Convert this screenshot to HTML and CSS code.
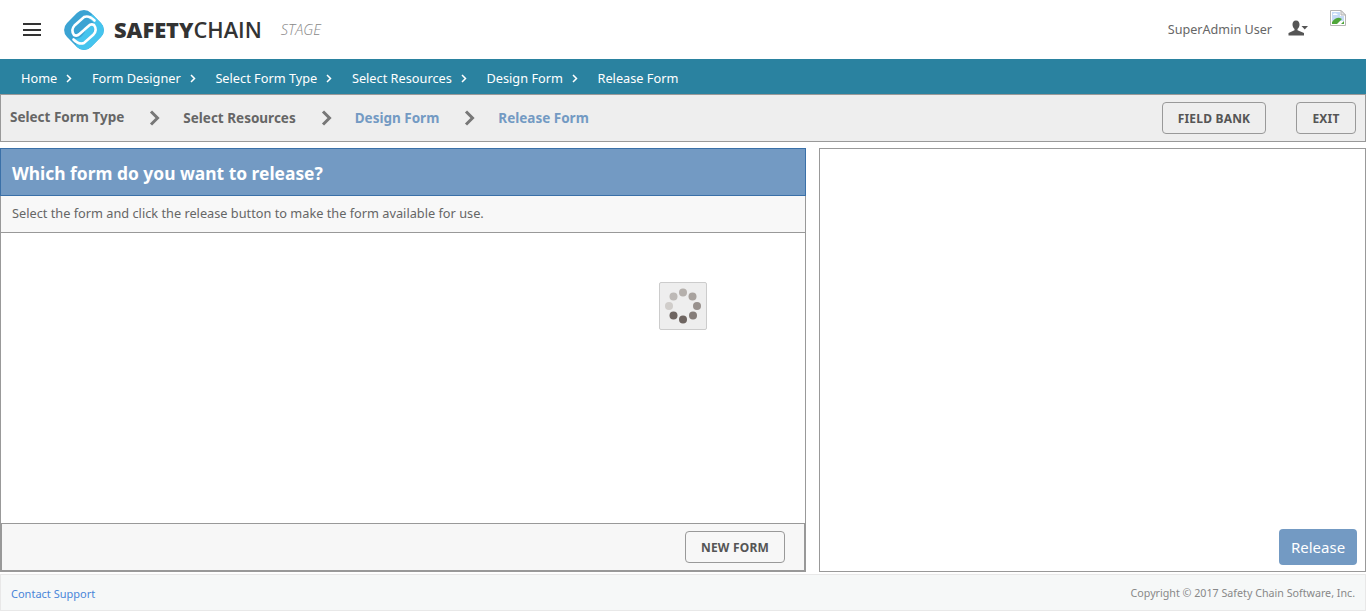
FILE: index.html
```html
<!DOCTYPE html>
<html lang="en">
<head>
<meta charset="utf-8">
<title>Release Form</title>
<link rel="stylesheet" href="styles.css">
</head>
<body>
<header class="topbar">
  <button class="menu" aria-label="Menu"><span></span><span></span><span></span></button>
  <svg class="logo" width="40" height="40" viewBox="0 0 40 40" aria-hidden="true">
    <defs><clipPath id="mark"><rect x="3" y="3" width="34" height="34" rx="10" transform="rotate(45 20 20)"/></clipPath></defs>
    <g clip-path="url(#mark)">
      <rect width="40" height="40" fill="#3ba3d3"/>
      <path d="M29 12 Q33 17 30 22 L20 32 Q16 35 12 33 L13 42 L42 42 L42 6 L31 4 Q27 5 23 7 Z" fill="#45c4ee"/>
      <path d="M21 19.500 L27 14 Q30 15 30 19 Q30 22 28 24 L20 32 Q16 35 10 29 Q15 29 18 26 L21 22 Z" fill="#45c4ee"/>
    </g>
    <path d="M30.500 10.500 Q25 5 20 7 L10.500 15.500 Q6.500 20 10 25 Q13 26.500 15.500 24 L19.500 20.500" fill="none" stroke="#fff" stroke-width="2.600" stroke-linecap="round"/>
    <path d="M9.500 29.500 Q15 35 20 33 L29.500 24.500 Q33.500 20 30 15 Q27 13.500 24.500 16 L20.500 19.500" fill="none" stroke="#fff" stroke-width="2.600" stroke-linecap="round"/>
  </svg>
  <div class="brand"><b>SAFETY</b><span>CHAIN</span></div>
  <div class="stage">STAGE</div>
  <div class="user">SuperAdmin User</div>
  <svg class="usericon" width="20" height="16" viewBox="0 0 20 16" aria-hidden="true">
    <path d="M8 0.500 C5.500 0.500 4.500 2.500 4.500 4.500 C4.500 6.800 5.500 8.300 6.500 9 L6.500 10.300 L0.500 13 L0.500 15.500 L16 15.500 L16 13 L9.500 10.300 L9.500 9 C10.500 8.300 11.500 6.800 11.500 4.500 C11.500 2.500 10.500 0.500 8 0.500 Z" fill="#555"/>
    <path d="M13.500 6 L20 6 L16.750 9.500 Z" fill="#555"/>
  </svg>
  <svg class="broken" width="16" height="16" viewBox="0 0 16 16" aria-hidden="true">
    <path d="M0.500 0.500 H11 L15.500 5 V15.500 H0.500 Z" fill="#fff" stroke="#b5b5b5"/>
    <path d="M2 2 H10 V6 H14 V11 H2 Z" fill="#c5daf6"/>
    <path d="M3 4 Q5 2.500 7 4 L8 5 H3 Z" fill="#fff"/>
    <path d="M2 14 V12 Q6 7 10 8 L12 9 L7 14 Z" fill="#4fa63a"/>
    <path d="M11 14 L14 11 V14 Z" fill="#4fa63a"/>
    <path d="M11 0.500 V5 H15.500 Z" fill="#e4e4e4" stroke="#b5b5b5"/>
  </svg>
</header>
<nav class="crumbs">
  <a>Home</a><svg class="sep" width="6" height="9" viewBox="0 0 6 9" aria-hidden="true"><path d="M1 1 L4.500 4.500 L1 8" fill="none" stroke="#fff" stroke-width="1.500"/></svg>
  <a>Form Designer</a><svg class="sep" width="6" height="9" viewBox="0 0 6 9" aria-hidden="true"><path d="M1 1 L4.500 4.500 L1 8" fill="none" stroke="#fff" stroke-width="1.500"/></svg>
  <a>Select Form Type</a><svg class="sep" width="6" height="9" viewBox="0 0 6 9" aria-hidden="true"><path d="M1 1 L4.500 4.500 L1 8" fill="none" stroke="#fff" stroke-width="1.500"/></svg>
  <a>Select Resources</a><svg class="sep" width="6" height="9" viewBox="0 0 6 9" aria-hidden="true"><path d="M1 1 L4.500 4.500 L1 8" fill="none" stroke="#fff" stroke-width="1.500"/></svg>
  <a>Design Form</a><svg class="sep" width="6" height="9" viewBox="0 0 6 9" aria-hidden="true"><path d="M1 1 L4.500 4.500 L1 8" fill="none" stroke="#fff" stroke-width="1.500"/></svg>
  <a>Release Form</a>
</nav>
<section class="steps">
  <span class="step first">Select Form Type</span>
  <svg class="chev" width="12" height="16" viewBox="0 0 12 16" aria-hidden="true"><path d="M2 1.500 L8.500 8 L2 14.500" fill="none" stroke="#777" stroke-width="3"/></svg>
  <span class="step">Select Resources</span>
  <svg class="chev" width="12" height="16" viewBox="0 0 12 16" aria-hidden="true"><path d="M2 1.500 L8.500 8 L2 14.500" fill="none" stroke="#777" stroke-width="3"/></svg>
  <span class="step todo">Design Form</span>
  <svg class="chev" width="12" height="16" viewBox="0 0 12 16" aria-hidden="true"><path d="M2 1.500 L8.500 8 L2 14.500" fill="none" stroke="#777" stroke-width="3"/></svg>
  <span class="step todo">Release Form</span>
  <button class="btn bank">FIELD BANK</button>
  <button class="btn exit">EXIT</button>
</section>
<main class="work">
  <section class="left">
    <h1 class="title">Which form do you want to release?</h1>
    <p class="hint">Select the form and click the release button to make the form available for use.</p>
    <div class="list">
      <div class="spinner" aria-hidden="true">
        <svg width="36" height="36" viewBox="0 0 36 36">
          <circle cx="18" cy="4.500" r="4" fill="#b5b0ac"/>
          <circle cx="27.500" cy="8.500" r="4" fill="#a8a29e"/>
          <circle cx="32" cy="18" r="4" fill="#98918d"/>
          <circle cx="28" cy="27.500" r="4" fill="#857d79"/>
          <circle cx="18" cy="31.500" r="4" fill="#6e6561"/>
          <circle cx="8.500" cy="27.500" r="4" fill="#6e6561"/>
          <circle cx="4" cy="18" r="4" fill="#d0cdca"/>
          <circle cx="8.500" cy="8.500" r="4" fill="#bdb9b6"/>
        </svg>
      </div>
    </div>
    <div class="leftfoot"><button class="btn newform">NEW FORM</button></div>
  </section>
  <section class="right">
    <button class="release">Release</button>
  </section>
</main>
<footer class="foot">
  <a class="support">Contact Support</a>
  <span class="copy">Copyright © 2017 Safety Chain Software, Inc.</span>
</footer>
</body>
</html>
```
FILE: styles.css
```css
* { box-sizing: border-box; }
html, body { margin: 0; padding: 0; }
body {
  width: 1366px;
  height: 612px;
  overflow: hidden;
  background: #fff;
  font-family: "Noto Sans", "Open Sans", sans-serif;
  font-size: 13px;
  color: #666;
}
button { font-family: inherit; cursor: pointer; }

.topbar { height: 59px; display: flex; align-items: center; position: relative; }
.menu { width: 18px; height: 13px; margin-left: 23px; padding: 0; border: 0; background: none; display: flex; flex-direction: column; justify-content: space-between; }
.menu span { display: block; height: 2px; background: #333; }
.logo { margin-left: 23px; }
.brand { margin-left: 10px; font-size: 21.800px; color: #333; font-family: "Open Sans", sans-serif; margin-top: -1px; }
.brand b { font-weight: 800; }
.brand span { font-weight: 600; }
.stage { margin-left: 19px; font-size: 14.600px; font-weight: 300; font-style: italic; color: #888; font-family: "Open Sans", sans-serif; margin-top: -1px; }
.user { margin-left: auto; font-size: 12.600px; color: #666; }
.usericon { margin-left: 16px; margin-top: -3px; }
.broken { margin-left: 22px; margin-right: 20px; margin-top: -23px; }

.crumbs { height: 35px; background: #2a82a0; display: flex; align-items: center; padding: 3px 0 0 21px; color: #fff; }
.crumbs a { font-size: 12.750px; color: #fff; }
.sep { margin: 0 19.600px 0 9px; }

.steps { height: 48px; background: #eee; border: 1px solid #999; display: flex; align-items: center; padding: 0 0 0 9px; }
.step { font-size: 13.500px; font-weight: 700; color: #666; }
.step.first { margin-top: -3px; }
.step.todo { color: #739ac3; }
.chev { margin: 0 22px 0 25px; }
.btn { height: 32px; background: transparent; border: 1px solid #999; border-radius: 4px; font-size: 12px; font-weight: 700; color: #555; letter-spacing: .2px; padding: 0; }
.bank { width: 104px; margin-left: auto; }
.exit { width: 60px; margin: 0 9px 0 30px; }

.work { display: flex; gap: 13px; margin-top: 6px; height: 424px; }
.left { width: 806px; display: flex; flex-direction: column; border: 1px solid #999; border-top: 0; border-bottom: 0; }
.title { margin: 0 0 0 -1px; width: 806px; height: 48px; background: #739ac3; border: 1px solid #3a70a8; color: #fff; font-size: 17.400px; font-weight: 700; line-height: 48px; padding-left: 11px; }
.hint { margin: 0 0 0 -1px; width: 806px; height: 37px; background: #f8f8f8; border: 1px solid #999; border-top: 0; font-size: 12.750px; line-height: 35px; padding-left: 11px; }
.list { flex: 1; position: relative; }
.spinner { position: absolute; left: 658px; top: 49px; width: 48px; height: 48px; background: #eee; border: 1px solid #ccc; border-radius: 2px; display: flex; align-items: center; justify-content: center; }
.leftfoot { height: 49px; margin-left: -1px; width: 806px; background: #f7f7f7; border: 2px solid #999; border-top: 1px solid #999; display: flex; align-items: center; justify-content: flex-end; padding-right: 19px; }
.newform { width: 100px; margin: 0; }

.right { flex: 1; border: 1px solid #999; display: flex; align-items: flex-end; justify-content: flex-end; padding: 0 8px 6px 0; }
.release { width: 78px; height: 36px; background: #739ac3; border: 0; border-radius: 4px; color: #fff; font-size: 15px; }

.foot { height: 37px; margin-top: 2px; background: #f6f8f8; border: 1px solid #e8e8e8; display: flex; align-items: center; justify-content: space-between; padding: 1px 10px 0; font-size: 11px; }
.support { color: #4a86d8; }
.copy { color: #888; font-size: 10.700px; }
```
